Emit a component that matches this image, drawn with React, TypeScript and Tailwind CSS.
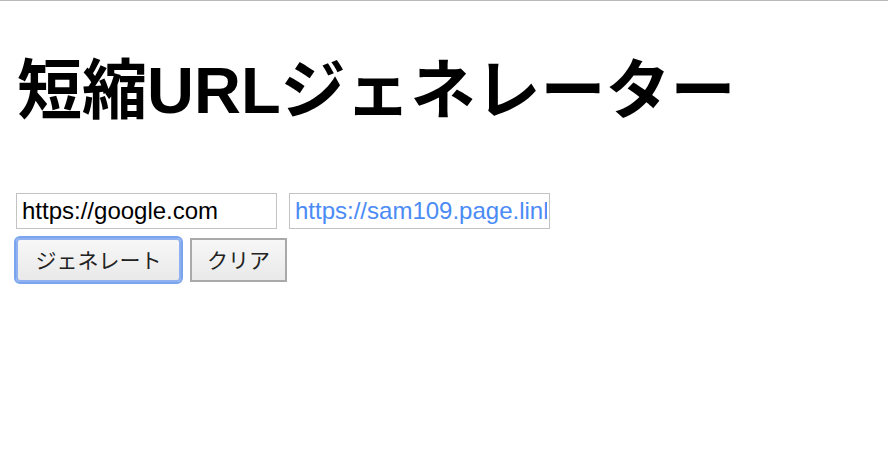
export default function App() {
  return (
    <div className="min-h-[456px] border-t border-[#b9b9b9] bg-white">
      <div className="px-4">
        <h1 className="mt-[57px] mb-[70px] ml-px font-['Liberation_Sans','Noto_Sans_CJK_JP',sans-serif] text-[65px] font-bold leading-[1] text-black">
          短縮URLジェネレーター
        </h1>
        <div className="flex gap-3">
          <input
            type="text"
            defaultValue="https://google.com"
            className="h-9 w-[261px] border border-[#c3c3c3] pl-[5px] pr-[2px] font-['Liberation_Sans','Noto_Sans_CJK_JP',sans-serif] text-[24px] text-black outline-none"
          />
          <input
            type="text"
            readOnly
            defaultValue="https://sam109.page.link/aBcD"
            className="h-9 w-[261px] border border-[#c3c3c3] pl-[5px] pr-[2px] font-['Liberation_Sans','Noto_Sans_CJK_JP',sans-serif] text-[24px] text-[#4b8bf5] outline-none"
          />
        </div>
        <div className="mt-[9px] flex gap-[9px]">
          <button className="h-11 w-[165px] rounded-[4px] border-2 border-[#8fb1f0] bg-gradient-to-b from-[#f7f7f7] to-[#e9e9e9] font-['Noto_Sans_CJK_JP',sans-serif] text-[21px] text-[#222] outline-2 outline-[#7aa5ee]">
            ジェネレート
          </button>
          <button className="h-11 w-[97px] border-2 border-[#a9a9a9] bg-gradient-to-b from-[#f7f7f7] to-[#e9e9e9] font-['Noto_Sans_CJK_JP',sans-serif] text-[21px] text-[#222]">
            クリア
          </button>
        </div>
      </div>
    </div>
  );
}
